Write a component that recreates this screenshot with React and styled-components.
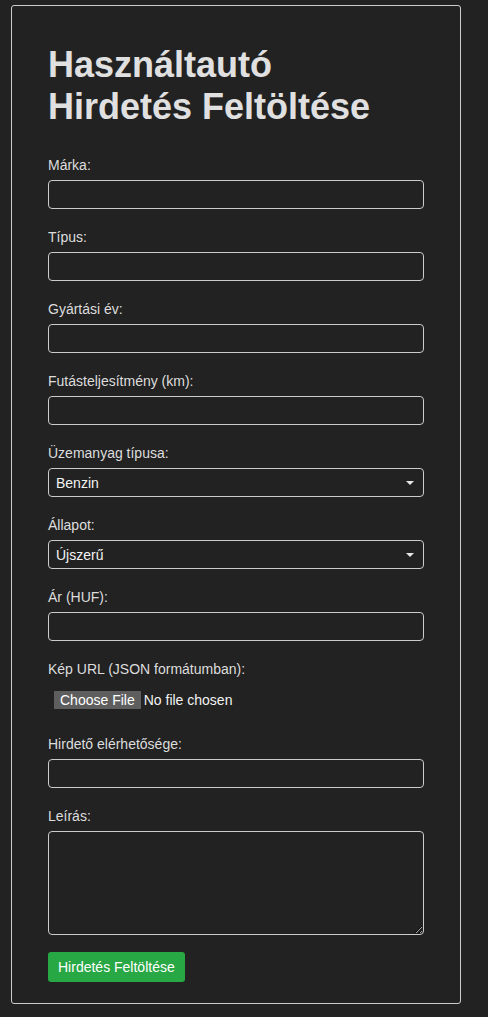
import React from "react";
import styled, { createGlobalStyle } from "styled-components";

const GlobalStyle = createGlobalStyle`
  html, body {
    margin: 0;
    padding: 0;
    background: #222222;
    color-scheme: dark;
  }
  body {
    font-family: "Liberation Sans", Arial, sans-serif;
    color: #dddddd;
  }
`;

const Container = styled.div`
  box-sizing: border-box;
  width: 450px;
  margin: 5px 0 0 11px;
  padding: 38px 36px 21px;
  border: 1px solid #cccccc;
  border-radius: 3px;
  background: #222222;
`;

const Title = styled.h1`
  margin: 0 0 29px;
  font-size: 36px;
  font-weight: 700;
  line-height: normal;
  color: #e0e0e0;
`;

const Form = styled.form`
  display: flex;
  flex-direction: column;
`;

const Field = styled.div`
  display: flex;
  flex-direction: column;
  margin-bottom: 20px;
`;

const Label = styled.label`
  display: block;
  margin-bottom: 7px;
  font-size: 14px;
  line-height: normal;
  color: #dddddd;
`;

const Input = styled.input`
  box-sizing: border-box;
  width: 100%;
  height: 29px;
  padding: 4px 7px;
  border: 1px solid #cccccc;
  border-radius: 4px;
  background: #222222;
  color: #eeeeee;
  font-family: inherit;
  font-size: 14px;
  outline: none;
`;

const SelectWrap = styled.div`
  position: relative;

  &::after {
    content: "";
    position: absolute;
    right: 10px;
    top: 13px;
    border-left: 4px solid transparent;
    border-right: 4px solid transparent;
    border-top: 4px solid #e6e6e6;
    pointer-events: none;
  }
`;

const Select = styled.select`
  box-sizing: border-box;
  width: 100%;
  height: 29px;
  padding: 0 24px 0 7px;
  border: 1px solid #cccccc;
  border-radius: 4px;
  background-color: #222222;
  color: #f2f2f2;
  font-family: inherit;
  font-size: 14px;
  outline: none;
  appearance: none;
  -webkit-appearance: none;
`;

const FileInput = styled.input`
  box-sizing: border-box;
  width: 100%;
  padding: 7px 6px;
  border: none;
  background: transparent;
  color: #f2f2f2;
  font-family: inherit;
  font-size: 14px;
  line-height: 18px;

  &::file-selector-button {
    height: 18px;
    margin-right: 3px;
    padding: 0 6px;
    border: none;
    background: #5e5e5e;
    color: #ffffff;
    font-family: inherit;
    font-size: 14px;
  }
`;

const TextArea = styled.textarea`
  box-sizing: border-box;
  width: 100%;
  height: 104px;
  padding: 6px 7px;
  border: 1px solid #cccccc;
  border-radius: 4px;
  background: #222222;
  color: #eeeeee;
  font-family: inherit;
  font-size: 14px;
  outline: none;
`;

const Submit = styled.button`
  align-self: flex-start;
  margin-top: -3px;
  height: 30px;
  padding: 0 10px;
  border: none;
  border-radius: 3px;
  background: #28a745;
  color: #ffffff;
  font-family: inherit;
  font-size: 14px;
  cursor: pointer;
`;

const textFields = [
  { id: "marka", label: "Márka:" },
  { id: "tipus", label: "Típus:" },
  { id: "ev", label: "Gyártási év:" },
  { id: "km", label: "Futásteljesítmény (km):" },
];

export default function App() {
  return (
    <>
      <GlobalStyle />
      <Container>
        <Title>
          Használtautó
          <br />
          Hirdetés Feltöltése
        </Title>
        <Form onSubmit={(e) => e.preventDefault()}>
          {textFields.map((f) => (
            <Field key={f.id}>
              <Label htmlFor={f.id}>{f.label}</Label>
              <Input id={f.id} type="text" />
            </Field>
          ))}
          <Field>
            <Label htmlFor="uzemanyag">Üzemanyag típusa:</Label>
            <SelectWrap>
              <Select id="uzemanyag" defaultValue="Benzin">
                <option>Benzin</option>
                <option>Dízel</option>
                <option>Elektromos</option>
                <option>Hibrid</option>
              </Select>
            </SelectWrap>
          </Field>
          <Field>
            <Label htmlFor="allapot">Állapot:</Label>
            <SelectWrap>
              <Select id="allapot" defaultValue="Újszerű">
                <option>Újszerű</option>
                <option>Használt</option>
                <option>Sérült</option>
              </Select>
            </SelectWrap>
          </Field>
          <Field>
            <Label htmlFor="ar">Ár (HUF):</Label>
            <Input id="ar" type="text" />
          </Field>
          <Field>
            <Label htmlFor="kep">Kép URL (JSON formátumban):</Label>
            <FileInput id="kep" type="file" />
          </Field>
          <Field>
            <Label htmlFor="kontakt">Hirdető elérhetősége:</Label>
            <Input id="kontakt" type="text" />
          </Field>
          <Field>
            <Label htmlFor="leiras">Leírás:</Label>
            <TextArea id="leiras" />
          </Field>
          <Submit type="submit">Hirdetés Feltöltése</Submit>
        </Form>
      </Container>
    </>
  );
}
